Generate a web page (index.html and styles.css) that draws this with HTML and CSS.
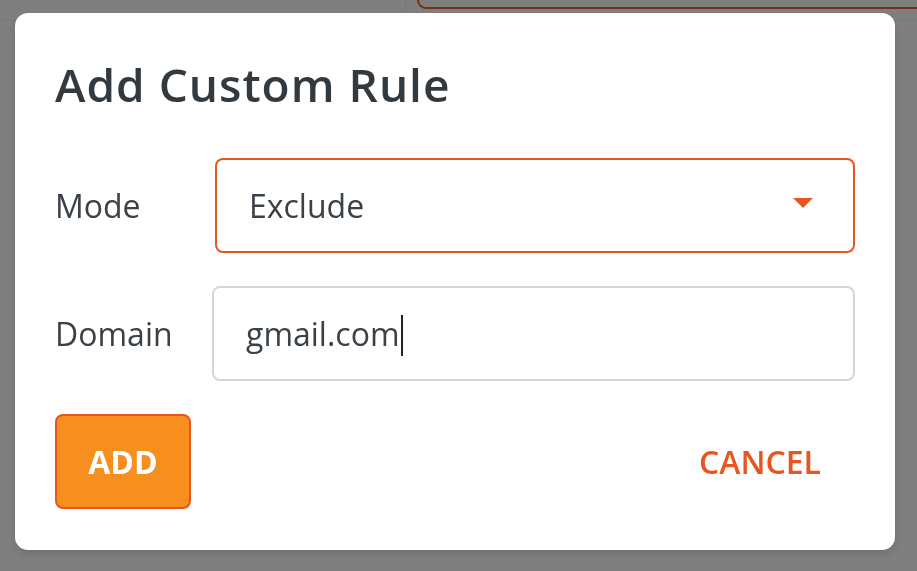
FILE: index.html
```html
<!DOCTYPE html>
<html lang="en">
<head>
<meta charset="utf-8">
<title>Add Custom Rule</title>
<link rel="stylesheet" href="styles.css">
</head>
<body>
<div class="page">
  <header class="topbar">
    <div class="side"></div>
    <div class="tab"></div>
  </header>
</div>
<div class="overlay"></div>
<div class="dialog" role="dialog" aria-labelledby="dlg-title">
  <h1 class="title" id="dlg-title">Add Custom Rule</h1>
  <div class="row">
    <label class="label label-mode">Mode</label>
    <div class="field select">
      <span class="value">Exclude</span>
      <svg class="arrow" width="20" height="10" viewBox="0 0 20 10" aria-hidden="true"><path d="M0 0H20L10 10Z" fill="#e8561f"/></svg>
    </div>
  </div>
  <div class="row">
    <label class="label label-domain">Domain</label>
    <div class="field input">
      <span class="value">gmail.com</span><span class="caret"></span>
    </div>
  </div>
  <div class="actions">
    <button class="btn btn-primary" type="button">ADD</button>
    <button class="btn btn-text" type="button">CANCEL</button>
  </div>
</div>
</body>
</html>
```
FILE: styles.css
```css
html, body {
  margin: 0;
  padding: 0;
  background: #ffffff;
  font-family: "Open Sans", "Liberation Sans", sans-serif;
  overflow: hidden;
}

.page {
  width: 917px;
  height: 571px;
}

.topbar {
  display: flex;
  height: 20px;
  border-bottom: 1px solid #eeeeee;
}

.side {
  width: 405px;
  border-right: 1px solid #eeeeee;
}

.tab {
  flex: 1;
  margin-left: 11px;
  height: 7px;
  border-left: 2px solid #ec5e24;
  border-bottom: 2px solid #ec5e24;
  border-bottom-left-radius: 9px;
}

.overlay {
  position: fixed;
  inset: 0;
  background: rgba(0, 0, 0, 0.5);
}

.dialog {
  position: fixed;
  left: 15px;
  top: 13px;
  width: 880px;
  box-sizing: border-box;
  padding: 40px 40px 41px;
  background: #ffffff;
  border-radius: 13px;
  box-shadow: 0 4px 10px rgba(0, 0, 0, 0.12);
  color: #343a40;
}

.title {
  margin: 0 0 43px;
  font-size: 46px;
  font-weight: 600;
  letter-spacing: 1px;
  line-height: normal;
  color: #32393f;
}

.row {
  display: flex;
  align-items: center;
  margin-bottom: 33px;
}

.label {
  font-size: 32px;
  color: #3a4147;
  flex: none;
}

.label-mode { width: 160px; }
.label-domain { width: 157px; }

.field {
  flex: 1;
  height: 95px;
  box-sizing: border-box;
  display: flex;
  align-items: center;
  border-radius: 8px;
  font-size: 32px;
  color: #3a4147;
}

.select {
  border: 2px solid #e8561f;
  padding: 0 40px 0 32px;
  justify-content: space-between;
}

.input {
  border: 2px solid #d6d6d6;
  padding: 0 32px;
}

.caret {
  display: inline-block;
  width: 2px;
  height: 41px;
  background: #1f2326;
  margin-left: 1px;
  margin-top: 4px;
}

.arrow {
  display: block;
  margin-top: -6px;
}

.actions {
  display: flex;
  justify-content: space-between;
  align-items: center;
}

.btn {
  font-family: "Open Sans", "Liberation Sans", sans-serif;
  height: 95px;
  box-sizing: border-box;
  font-size: 32px;
  cursor: pointer;
}

.btn-primary {
  width: 136px;
  padding: 0;
  background: #f78f1e;
  border: 2px solid #e8561f;
  border-radius: 8px;
  color: #ffffff;
  font-weight: 700;
}

.btn-text {
  padding: 0 34px;
  background: transparent;
  border: none;
  color: #e8561f;
  font-weight: 600;
}
```
